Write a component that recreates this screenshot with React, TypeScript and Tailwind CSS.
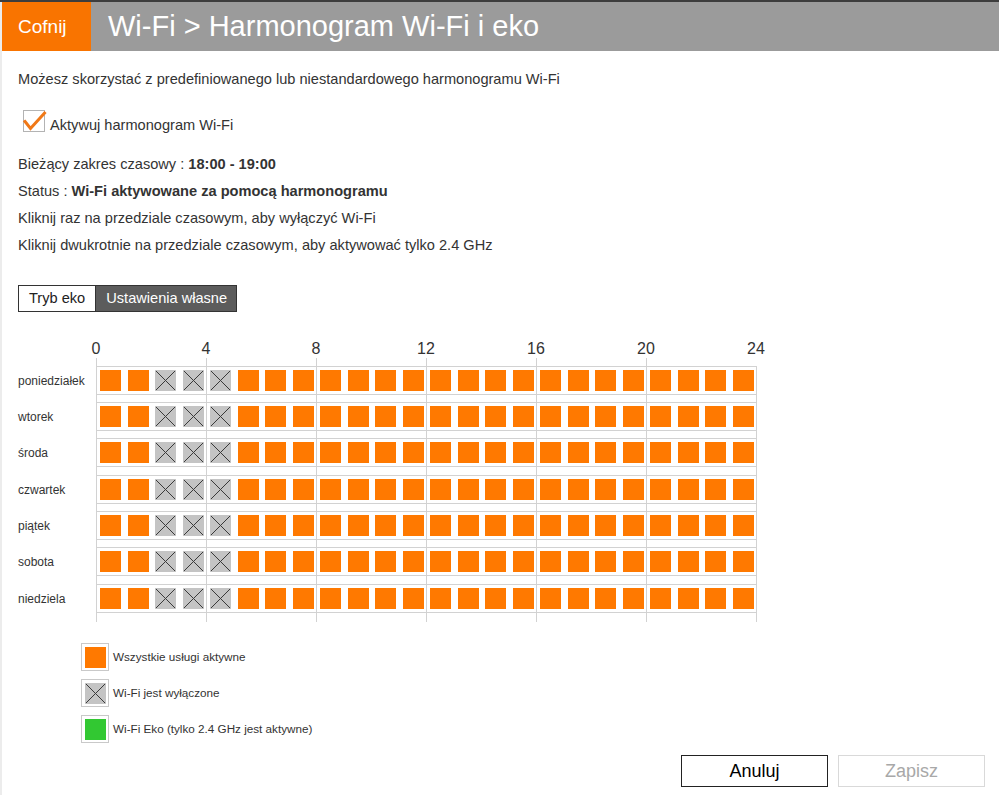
import React from "react";

const days = ["poniedziałek", "wtorek", "środa", "czwartek", "piątek", "sobota", "niedziela"];
const offHours = new Set([2, 3, 4]);
const gaps = ["h-[7px]", "h-[7px]", "h-[8px]", "h-[7px]", "h-[7px]", "h-[8px]"];

function Cell({ off }: { off: boolean }) {
  if (off) {
    return (
      <div className="w-[21px] h-[21px] shrink-0 bg-[#c4c4c4]">
        <svg width="21" height="21" viewBox="0 0 21 21" className="block">
          <path d="M1 1L20 20M20 1L1 20" stroke="#3a3a3a" strokeWidth="1" fill="none" />
        </svg>
      </div>
    );
  }
  return <div className="w-[21px] h-[21px] shrink-0 bg-[#ff7900]" />;
}

function GridRow() {
  return (
    <div className="flex h-[29px] border-y border-[#d2d2d2]">
      {[0, 1, 2, 3, 4, 5].map((g) => (
        <div
          key={g}
          className={
            g === 5
              ? "flex items-center gap-[6.5px] pl-[3px] w-[111px] border-l border-r border-[#d2d2d2]"
              : "flex items-center gap-[6.5px] pl-[3px] w-[110px] border-l border-[#d2d2d2]"
          }
        >
          {[0, 1, 2, 3].map((h) => (
            <Cell key={h} off={offHours.has(g * 4 + h)} />
          ))}
        </div>
      ))}
    </div>
  );
}

function Spacer({ hc, right = true }: { hc: string; right?: boolean }) {
  return (
    <div className={"flex " + hc}>
      <div className="w-[78px] shrink-0" />
      {[0, 1, 2, 3, 4, 5].map((g) => (
        <div
          key={g}
          className={
            g === 5 && right
              ? "w-[111px] h-full border-l border-r border-[#d2d2d2]"
              : "w-[110px] h-full border-l border-[#d2d2d2]"
          }
        />
      ))}
    </div>
  );
}

function LegendItem({ kind, label }: { kind: "on" | "off" | "eco"; label: string }) {
  return (
    <div className="flex items-center">
      <div className="w-[28px] h-[28px] border border-[#c9c9c9] flex items-center justify-center bg-white">
        {kind === "on" && <div className="w-[21px] h-[21px] bg-[#ff7900]" />}
        {kind === "off" && <Cell off={true} />}
        {kind === "eco" && <div className="w-[21px] h-[21px] bg-[#32c832]" />}
      </div>
      <span className="ml-[4px] text-[11.7px] leading-[16px] text-[#333]">{label}</span>
    </div>
  );
}

export default function App() {
  return (
    <div className="w-[999px] h-[795px] bg-white overflow-hidden font-['Liberation_Sans',Arial,sans-serif] text-[#333]">
      <div className="h-[2px] bg-[#3d3d3d]" />
      <div className="border-l-2 border-[#ececec] h-[793px] flex flex-col">
        {/* Header */}
        <div className="flex h-[49px] shrink-0">
          <div className="w-[89px] bg-[#f97400] flex items-center pl-[16px]">
            <span className="text-white text-[19px] leading-none">Cofnij</span>
          </div>
          <div className="flex-1 bg-[#9b9b9b] flex items-center pl-[17px]">
            <span className="text-white text-[29px] leading-none">Wi-Fi &gt; Harmonogram Wi-Fi i eko</span>
          </div>
        </div>

        <div className="pl-[16px] flex flex-col">
          <p className="mt-[18px] text-[14.6px] leading-[20px]">
            Możesz skorzystać z predefiniowanego lub niestandardowego harmonogramu Wi-Fi
          </p>

          <div className="mt-[21px] flex items-start h-[25px]">
            <div className="ml-[5px] w-[22px] h-[22px] border border-[#b3b3b3] bg-white relative shrink-0">
              <svg width="22" height="22" viewBox="0 0 22 22" className="absolute left-0 top-0 overflow-visible">
                <path d="M1 10.5L6.5 17.5L20.5 2" stroke="#f07817" strokeWidth="3" fill="none" strokeLinecap="square" />
              </svg>
            </div>
            <span className="ml-[5px] mt-[5px] text-[14.6px] leading-[20px]">Aktywuj harmonogram Wi-Fi</span>
          </div>

          <div className="mt-[16px] flex flex-col text-[14.6px] leading-[27px]">
            <p>
              Bieżący zakres czasowy : <b className="font-bold">18:00 - 19:00</b>
            </p>
            <p>
              Status : <b className="font-bold">Wi-Fi aktywowane za pomocą harmonogramu</b>
            </p>
            <p>Kliknij raz na przedziale czasowym, aby wyłączyć Wi-Fi</p>
            <p>Kliknij dwukrotnie na przedziale czasowym, aby aktywować tylko 2.4 GHz</p>
          </div>

          <div className="mt-[26px] flex w-fit border border-[#333] h-[27px] text-[14.6px]">
            <div className="px-[10px] flex items-center bg-white text-[#222]">Tryb eko</div>
            <div className="pl-[10px] pr-[9px] flex items-center bg-[#5c5c5c] text-white border-l border-[#333]">
              Ustawienia własne
            </div>
          </div>

          {/* Hour labels */}
          <div className="mt-[28px] flex ml-[68px] gap-[90px] text-[16px] leading-[18px] text-[#333]">
            {[0, 4, 8, 12, 16, 20, 24].map((h) => (
              <div key={h} className="w-[20px] text-center">
                {h}
              </div>
            ))}
          </div>

          {/* Grid */}
          <div className="flex flex-col">
            <Spacer hc="h-[8px]" right={false} />
            {days.map((d, i) => (
              <React.Fragment key={d}>
                <div className="flex items-center">
                  <div className="w-[78px] shrink-0 text-[12px] leading-[16px] text-[#333]">{d}</div>
                  <GridRow />
                </div>
                {i < days.length - 1 && <Spacer hc={gaps[i]} />}
              </React.Fragment>
            ))}
            <Spacer hc="h-[9px]" />
          </div>

          {/* Legend */}
          <div className="mt-[21px] ml-[63px] flex flex-col gap-[8px]">
            <LegendItem kind="on" label="Wszystkie usługi aktywne" />
            <LegendItem kind="off" label="Wi-Fi jest wyłączone" />
            <LegendItem kind="eco" label="Wi-Fi Eko (tylko 2.4 GHz jest aktywne)" />
          </div>

          {/* Buttons */}
          <div className="mt-[12px] flex justify-end gap-[10px] pr-[14px]">
            <button className="w-[147px] h-[32px] border border-[#222] bg-white text-[18px] text-black">Anuluj</button>
            <button className="w-[147px] h-[32px] border border-[#d9d9d9] bg-white text-[18px] text-[#a8a8a8]">Zapisz</button>
          </div>
        </div>
      </div>
    </div>
  );
}
